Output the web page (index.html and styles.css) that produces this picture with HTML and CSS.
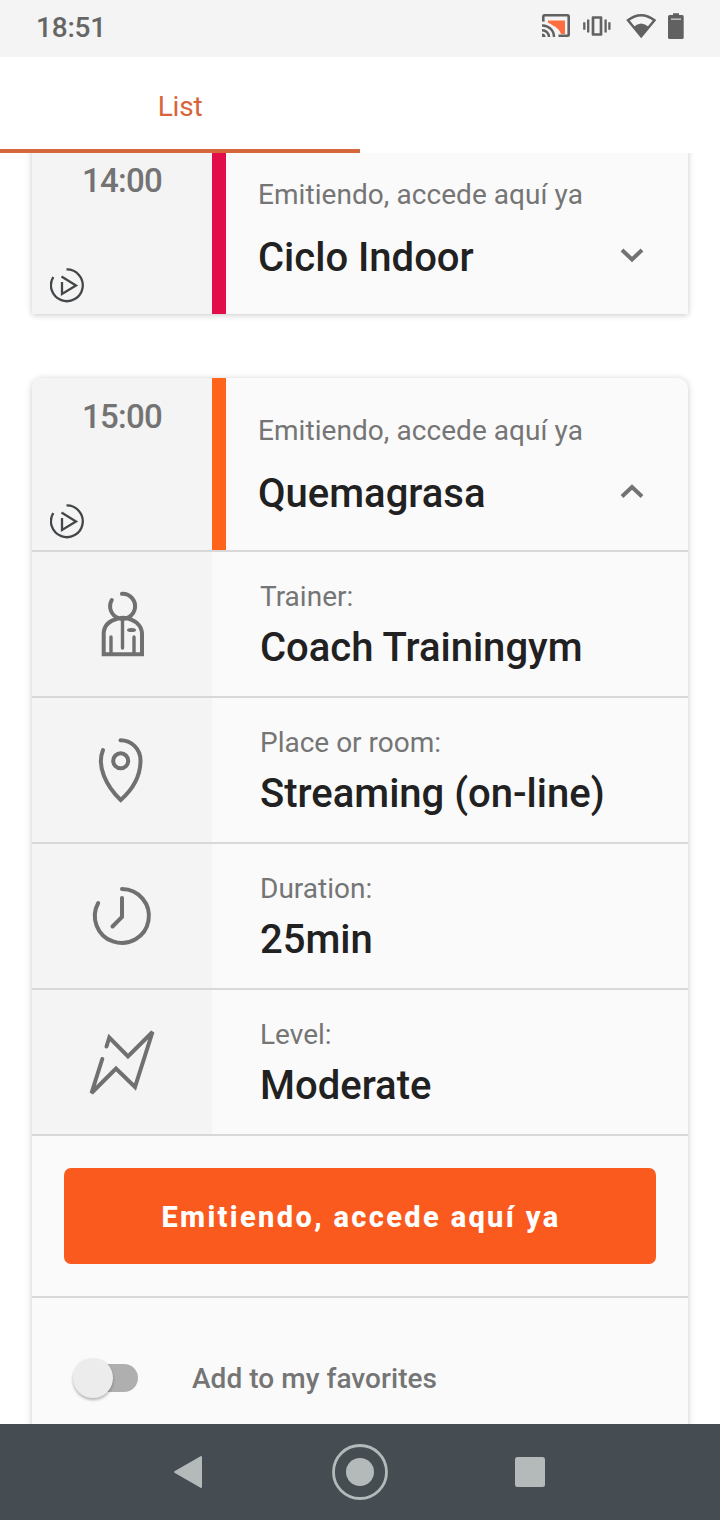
FILE: index.html
```html
<!DOCTYPE html>
<html lang="en">
<head>
    <meta charset="UTF-8">
    <meta name="viewport" content="width=device-width, initial-scale=1.0">
    <title>Classes</title>
    <link rel="stylesheet" href="styles.css">
</head>
<body>
    <header class="status-bar">
        <span class="clock">18:51</span>
        <svg class="status-icons" width="148" height="32" viewBox="0 0 148 32">
            <path d="M8 8.500H25V22H21C20 18 15 13 8 12Z" fill="#ff6e40"/>
            <path d="M3.300 10V4.500Q3.300 3.300 4.500 3.300H27.500Q28.700 3.300 28.700 4.500V22.500Q28.700 23.700 27.500 23.700H18.500" fill="none" stroke="#616161" stroke-width="2.600"/>
            <path d="M2 13.200A12 12 0 0 1 13.500 25H18A16 16 0 0 0 2 9.500Z" fill="#f4f4f4"/>
            <path d="M2 13.500A11.500 11.500 0 0 1 14 25M2 18.300A6.800 6.800 0 0 1 9 25" fill="none" stroke="#616161" stroke-width="2.500"/>
            <path d="M2 21.500A3.500 3.500 0 0 1 5.500 25H2Z" fill="#616161"/>
            <path d="M52.500 5.500H60.500V22.500H52.500Z" transform="translate(.5 0)" fill="none" stroke="#616161" stroke-width="2.700" stroke-linejoin="round"/>
            <path d="M48.200 7.500V20.500M65.600 7.500V20.500M44.300 10.300V17.700M69.400 10.300V17.700" fill="none" stroke="#616161" stroke-width="2.300"/>
            <path d="M88 8.300Q101 -1.800 114.500 8.300L101.200 24.300Z" fill="none" stroke="#616161" stroke-width="2.500"/>
            <path d="M93.500 15Q101 8 109 15L101.200 25Z" fill="#616161"/>
            <path d="M133 1.200H139V3H142.300Q143.700 3 143.700 4.500V25.500Q143.700 27 142.300 27H129.500Q128 27 128 25.500V4.500Q128 3 129.500 3H133Z" fill="#616161"/>
            <path d="M131 7.200H141" stroke="#c4c4c4" stroke-width="1.500"/>
        </svg>
    </header>

    <nav class="tabs">
        <div class="tab active">List</div>
    </nav>

    <main class="class-list">
        <section class="card card-scrolled">
            <div class="card-header">
                <div class="time-col">
                    <span class="time">14:00</span>
                    <svg class="play-icon" width="36" height="36" viewBox="0 0 36 36">
                        <path d="M3.300 9A15.900 15.900 0 1 0 16.500 1.400M12 14V26L26 17.500L11.500 8.500" fill="none" stroke="#444749" stroke-width="2.300"/>
                    </svg>
                </div>
                <div class="stripe stripe-red"></div>
                <div class="card-info">
                    <p class="label">Emitiendo, accede aquí ya</p>
                    <h2 class="title">Ciclo Indoor</h2>
                </div>
                <svg class="chevron" width="24" height="16" viewBox="0 0 24 16">
                    <path d="M2 2L12 11.500L22 2" fill="none" stroke="#737373" stroke-width="4"/>
                </svg>
            </div>
        </section>

        <section class="card card-open">
            <div class="card-header">
                <div class="time-col">
                    <span class="time">15:00</span>
                    <svg class="play-icon" width="36" height="36" viewBox="0 0 36 36">
                        <path d="M3.300 9A15.900 15.900 0 1 0 16.500 1.400M12 14V26L26 17.500L11.500 8.500" fill="none" stroke="#444749" stroke-width="2.300"/>
                    </svg>
                </div>
                <div class="stripe stripe-orange"></div>
                <div class="card-info">
                    <p class="label">Emitiendo, accede aquí ya</p>
                    <h2 class="title">Quemagrasa</h2>
                </div>
                <svg class="chevron" width="24" height="16" viewBox="0 0 24 16">
                    <path d="M2 12.500L12 3L22 12.500" fill="none" stroke="#737373" stroke-width="4"/>
                </svg>
            </div>

            <div class="row">
                <div class="row-icon">
                    <svg width="90" height="90" viewBox="0 0 90 90">
                        <path d="M31.800 20A12.500 12.500 0 1 0 42 13.800M38 38.500C28 41 23.700 47 23.700 54V74.300H62V54C62 47 57 41 48 38.500Q43 37 38 38.500"/>
                        <path class="thin" d="M42.500 38V68M31 57V74M54 57V74"/>
                        <ellipse class="filled" cx="51.500" cy="50" rx="4.500" ry="2"/>
                    </svg>
                </div>
                <div class="row-info">
                    <p class="label">Trainer:</p>
                    <h3 class="title">Coach Trainingym</h3>
                </div>
            </div>
            <div class="row">
                <div class="row-icon">
                    <svg width="90" height="90" viewBox="0 0 90 90">
                        <path d="M23 24C16.500 40 26 60 40.700 74C52 64 60.500 50 60.500 34.500C60.500 22.500 51 14.300 40.500 14.300"/>
                        <circle cx="40.700" cy="34.800" r="7.500"/>
                    </svg>
                </div>
                <div class="row-info">
                    <p class="label">Place or room:</p>
                    <h3 class="title">Streaming (on-line)</h3>
                </div>
            </div>
            <div class="row">
                <div class="row-icon">
                    <svg width="90" height="90" viewBox="0 0 90 90">
                        <path d="M18.200 31A27 27 0 1 0 42 17"/>
                        <path d="M42 26V45L32.500 54.500"/>
                    </svg>
                </div>
                <div class="row-info">
                    <p class="label">Duration:</p>
                    <h3 class="title">25min</h3>
                </div>
            </div>
            <div class="row">
                <div class="row-icon">
                    <svg width="90" height="90" viewBox="0 0 90 90">
                        <path d="M26.500 28.500L29.300 19.500L48 38.500L72.500 14L55 69L36 50.500L11.500 75L22.300 41"/>
                    </svg>
                </div>
                <div class="row-info">
                    <p class="label">Level:</p>
                    <h3 class="title">Moderate</h3>
                </div>
            </div>

            <div class="action">
                <button class="access-btn">Emitiendo, accede aquí ya</button>
            </div>

            <div class="favorites">
                <div class="switch"><div class="knob"></div></div>
                <span class="favorites-text">Add to my favorites</span>
            </div>
        </section>
    </main>

    <footer class="nav-bar">
        <svg width="720" height="96" viewBox="0 0 720 96">
            <path d="M175 48L201 33V63Z" fill="#b4b9b9" stroke="#b4b9b9" stroke-width="2" stroke-linejoin="round"/>
            <circle cx="360" cy="48" r="26.500" fill="none" stroke="#b4b9b9" stroke-width="2.800"/>
            <circle cx="360" cy="48" r="14" fill="#b4b9b9"/>
            <rect x="515" y="33" width="30" height="30" rx="2.500" fill="#b4b9b9"/>
        </svg>
    </footer>
</body>
</html>
```
FILE: styles.css
```css
* {
    box-sizing: border-box;
}
body {
    margin: 0;
    height: 1520px;
    overflow: hidden;
    display: flex;
    flex-direction: column;
    font-family: Roboto, "Liberation Sans", sans-serif;
    background: #fff;
}
p, h2, h3 {
    margin: 0;
}
.status-bar {
    height: 57px;
    padding: 0 32px 2px 36px;
    display: flex;
    align-items: center;
    justify-content: space-between;
    background: #f4f4f4;
}
.clock {
    font-size: 28px;
    font-weight: 500;
    color: #666;
    letter-spacing: -0.2px;
}
.tabs {
    height: 96px;
    display: flex;
}
.tab {
    width: 360px;
    line-height: 100px;
    text-align: center;
    font-size: 28px;
    letter-spacing: -0.2px;
    color: #d8643a;
}
.tab.active {
    height: 96px;
    border-bottom: 4px solid #d5683c;
}
.class-list {
    flex: 1;
    min-height: 0;
    overflow: hidden;
    padding: 0 32px;
}
.card {
    background: #fafafa;
    box-shadow: 0 1px 6px rgba(0, 0, 0, 0.22);
}
.card-scrolled {
    margin-top: -11px;
    margin-bottom: 64px;
}
.card-open {
    border-radius: 10px 10px 0 0;
    height: 1100px;
}
.card-header {
    height: 172px;
    display: flex;
}
.time-col {
    width: 180px;
    padding: 18px 18px 10px;
    display: flex;
    flex-direction: column;
    justify-content: space-between;
    background: #f4f4f4;
}
.card-open .time-col {
    border-top-left-radius: 10px;
}
.time {
    line-height: 41px;
    text-align: center;
    font-size: 33px;
    font-weight: 500;
    letter-spacing: -0.7px;
    color: #737373;
}
.play-icon {
    display: block;
}
.stripe {
    width: 14px;
}
.stripe-red {
    background: #e10e49;
}
.stripe-orange {
    background: #ff641a;
}
.card-info {
    flex: 1;
    padding: 33px 0 0 32px;
}
.label {
    font-size: 28px;
    line-height: 40px;
    color: #757575;
    white-space: nowrap;
}
.card-info .label {
    letter-spacing: 0.06px;
}
.title {
    font-size: 40px;
    line-height: 48px;
    font-weight: 500;
    color: #212121;
    white-space: nowrap;
}
.card-info .title {
    margin-top: 19px;
}
.chevron {
    margin: 106px 44px 0 0;
}
.row {
    height: 146px;
    display: flex;
    border-top: 2px solid #d8d8d8;
}
.row-icon {
    width: 180px;
    padding: 28px 0 0 48px;
    background: #f4f4f4;
}
.row-icon svg {
    display: block;
    fill: none;
    stroke: #707070;
    stroke-width: 4px;
    stroke-linecap: round;
}
.row-icon .thin {
    stroke-width: 3.4px;
}
.row-icon .filled {
    fill: #707070;
    stroke: none;
}
.row-info {
    padding: 25px 0 0 48px;
}
.row-info .title {
    margin-top: 7px;
}
.action {
    height: 162px;
    padding: 32px;
    border-top: 2px solid #d8d8d8;
}
.access-btn {
    display: block;
    width: 100%;
    height: 96px;
    padding: 2px 0 0 2px;
    border: none;
    border-radius: 7px;
    background: #fb5a1e;
    color: #fff;
    font-family: inherit;
    font-size: 29px;
    font-weight: 800;
    letter-spacing: 2.35px;
}
.favorites {
    padding: 60px 0 0 41px;
    display: flex;
    align-items: center;
    border-top: 2px solid #d8d8d8;
}
.switch {
    width: 65px;
    height: 28px;
    display: flex;
    align-items: center;
    border-radius: 14px;
    background: linear-gradient(#afafaf, #afafaf) right / 45px 28px no-repeat;
}
.knob {
    width: 40px;
    height: 40px;
    flex: none;
    border-radius: 50%;
    background: #ececec;
    box-shadow: 0 2px 3px rgba(0, 0, 0, 0.28);
}
.favorites-text {
    margin-left: 54px;
    padding-top: 2px;
    line-height: 38px;
    font-size: 28px;
    font-weight: 500;
    letter-spacing: 0.05px;
    color: #757575;
}
.nav-bar {
    height: 96px;
    background: #454d52;
}
.nav-bar svg {
    display: block;
}
```
